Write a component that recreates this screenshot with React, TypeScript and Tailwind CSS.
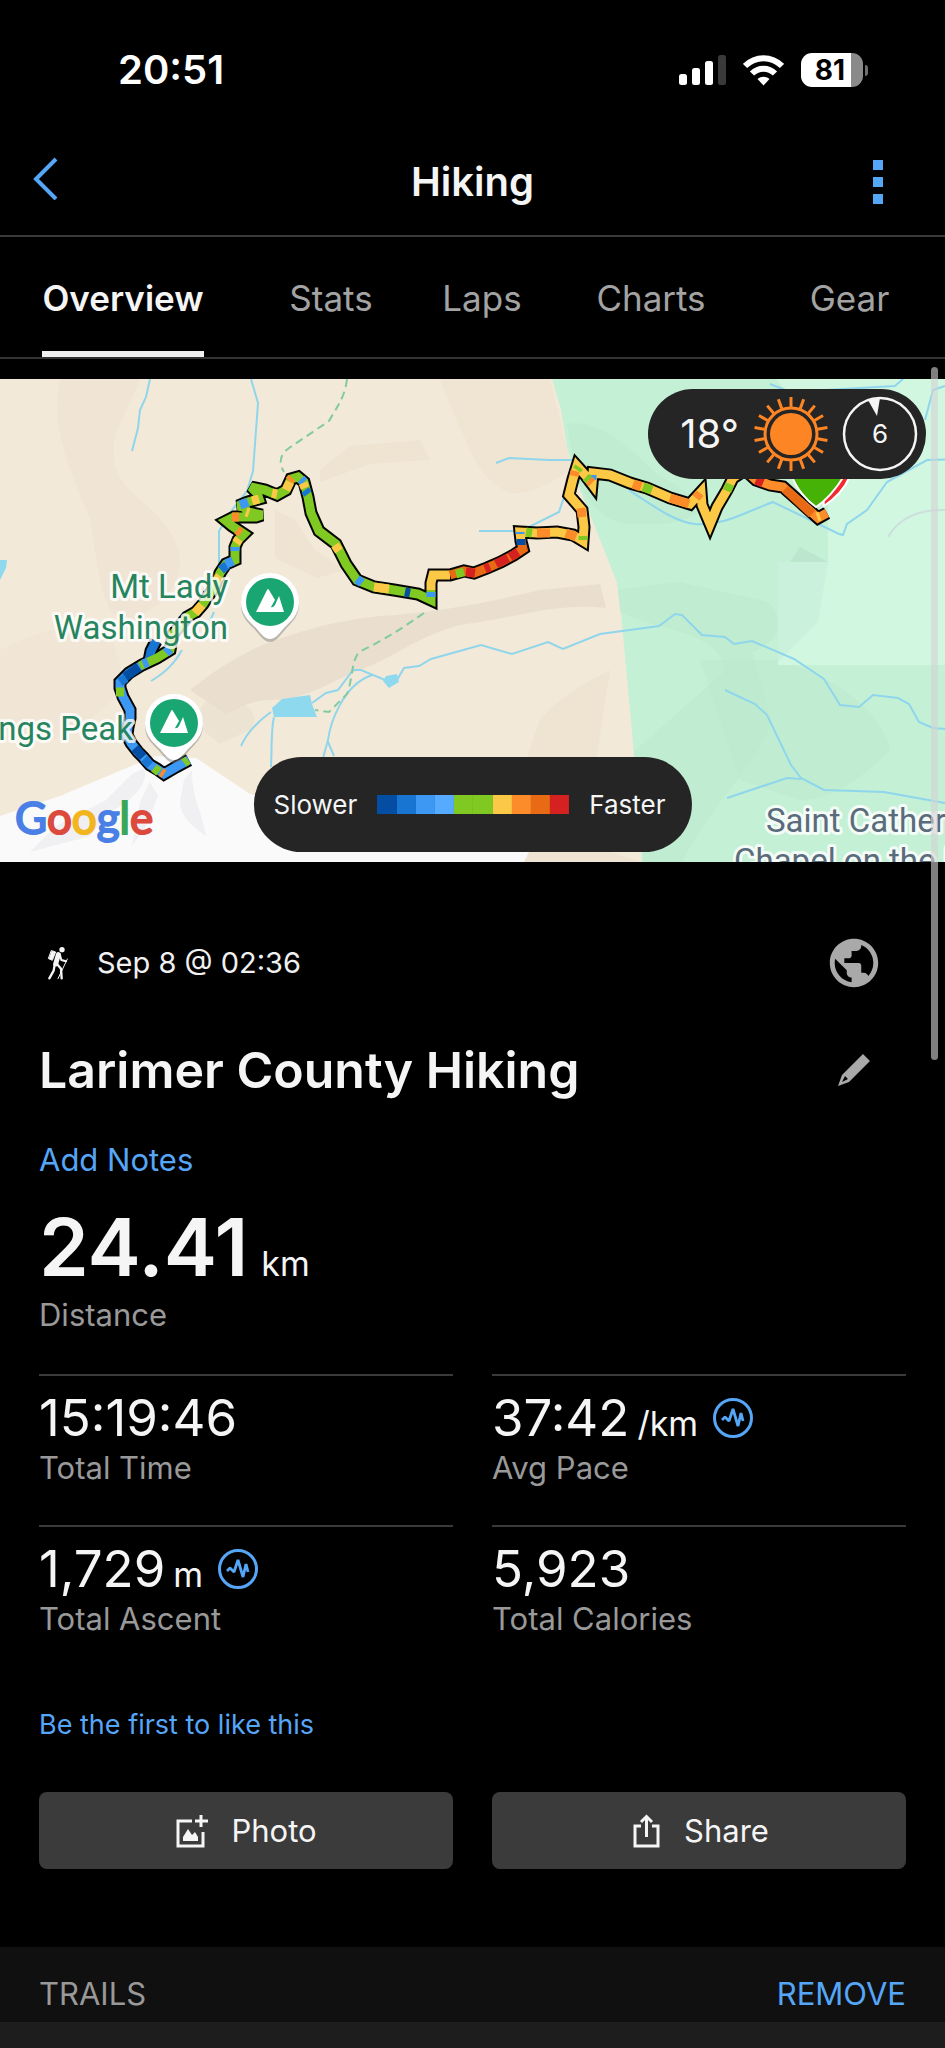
import React from 'react';
import { MdPublic } from 'react-icons/md';

const BLUE_DARK = '#034ea2';
const BLUE = '#1876d2';
const BLUE_LIGHT = '#3d98f4';
const GREEN = '#7fc922';
const YELLOW = '#fcc947';
const ORANGE = '#fc8b2a';
const ORANGE_DARK = '#e96a14';
const RED = '#d62121';

const tabs = ['Overview', 'Stats', 'Laps', 'Charts', 'Gear'];

const paceScale = [BLUE_DARK, BLUE, BLUE_LIGHT, '#57abff', GREEN, GREEN, YELLOW, ORANGE, ORANGE_DARK, RED];

// whole track, drawn twice: once as the outline and once per pace section
const sections = [
  { color: BLUE_LIGHT, points: '189,760 176,767 164,774 157,769 150,765 143,757 138,752 131,743 127,735 128,727 130,718 130,710 123,697 120,688 120,682 129,673 142,665' },
  { color: BLUE, points: '149,661 151,651 156,641' },
  { color: GREEN, points: '142,665 157,658 170,650 173,634 187,617 196,612 203,604 208,596 214,588 220,573 226,564 235,560 235,547 238,540 244,534 232,526 226,521 234,517 256,517 262,515 248,512 244,507 238,506 248,502 259,499 257,493 251,487 265,490 277,495 286,490 291,479 298,477 304,482 308,497 311,513 319,531 336,544 346,564 357,580 374,587 394,590 418,594 431,600 431,590' },
  { color: YELLOW, points: '431,590 431,583 433,575 450,575' },
  { color: ORANGE_DARK, points: '450,575 464,571 474,573 487,568 501,562 514,555 523,549 521,541' },
  { color: YELLOW, points: '521,541 520,532 537,533 557,532 573,535 583,541 584,527 582,510 569,495 573,479 577,466 586,476 592,484 593,473 610,475 630,483 647,488 670,498 690,504 701,492 702,505 710,524 717,507 727,490 733,478 745,470' },
  { color: ORANGE, points: '745,470 756,480 770,485 783,487 800,502 818,518 827,513' },
];

const route = sections
  .filter((_, i) => i !== 1)
  .map((s) => s.points)
  .join(' ');

// short stretches where the pace differs from the rest of its section
const accents = [
  { color: GREEN, d: 'M184 763l4 -3M154 768l5 4M116 692h8M140 666l6 -3' },
  { color: ORANGE, d: 'M161 772l3 2M232 517l7 0M237 530l4 3M289 481l3 -3' },
  { color: BLUE_DARK, d: 'M135 748l8 9M125 677l14 -10M405 592l5 1M521 545v-6' },
  { color: BLUE, d: 'M150 765l-6 -6M120 682l6 -4M221 570l6 -5M305 490l3 4' },
  { color: BLUE_LIGHT, d: 'M143 664l5 -2M166 653l4 -4M226 564l7 -3M235 551v-4M240 505l8 -3M431 597v-5M357 579l5 4M301 479l3 3M592 480v-5M520 534v-2' },
  { color: YELLOW, d: 'M195 613l7 -8M236 543l3 -4M217 580l3 -4M252 501l7 -2M272 493l5 1M286 490l4 -8M303 483l2 5M335 545l4 6M374 587l15 2M246 512l3 1' },
  { color: GREEN, d: 'M456 574l8 -2M577 470l2 -3M526 532l6 1M583 536v4M643 487l9 3M586 477l3 3M727 491l3 -7' },
  { color: RED, d: 'M466 572l9 1M485 569l5 -2M496 564l12 -6M510 557l8 -5M756 480l7 3' },
  { color: ORANGE, d: 'M537 533h13M566 533l10 4M575 471l-1 5M582 517l-1 -9M633 484l8 3M670 498l19 6M696 498l4 -5M589 480l3 3' },
  { color: ORANGE_DARK, d: 'M785 489l27 25' },
  { color: YELLOW, d: 'M817 517l3 -1' },
];

const streams = [
  'M150 379l-4 18 -6 13 -2 18 -6 23',
  'M251 379l7 24 -5 68 -6 20 -15 19 -13 21v34',
  'M214 612l-4 9M182 650c-8 14 -16 22 -31 31',
  'M271 712c-14 10 -24 20 -30 34M274 717c-3 12 -2 30 -3 50',
  'M312 703l14 -10 12 -3 15 -20h8l24 10 12 0 7 -12 15 -2 12 -7 50 -14 31 9 36 -12 15 7 37 -15 59 -8 16 -12 7 1 20 20 23 2 9 7 18 -3 42 18 30 20 16 26 19 2 14 -12 25 3 11 6 10 18 14 6 24 2',
  'M372 675c-30 10 -42 50 -44 65l-5 18M328 742l6 14',
  'M496 463l13 -5 40 2h30M479 531h42l38 -19 7 -21 14 -10',
  'M629 490c24 16 46 32 66 34 30 2 50 -12 78 -22l66 32 4 1 4 -11 20 -14 20 -28 40 -22 34 -1',
  'M770 384l20 8 105 -6 9 -8M925 420l8 -30 12 -4',
  'M725 690l30 14 12 11 24 50 10 13 23 12 60 2 61 11',
  'M727 798l60 -20 14 1',
];

const footpaths = ['M347 379c-2 18 -10 28 -18 42l-40 27c-10 7 -10 16 -5 24', 'M424 613c-20 14 -38 26 -65 39 -8 10 -6 26 -12 42l-18 18 -14 -2'];

const stats = [
  { value: '15:19:46', label: 'Total Time' },
  { value: '37:42', unit: '/km', label: 'Avg Pace', pulse: true },
  { value: '1,729', unit: 'm', label: 'Total Ascent', pulse: true },
  { value: '5,923', label: 'Total Calories' },
];

const googleLetters = [
  ['G', '#4a7fe5'],
  ['o', '#db4a3d'],
  ['o', '#f2b51d'],
  ['g', '#4a7fe5'],
  ['l', '#3aa757'],
  ['e', '#db4a3d'],
];

function StatusBar() {
  return (
    <div className="flex h-[140px] items-center justify-between pl-[118px] pr-[77px]">
      <span className="text-[40px] leading-[48px] font-semibold text-white">20:51</span>
      <div className="flex items-center">
        <svg className="mr-[17px] h-[32px] w-[48px]" viewBox="0 0 48 32">
          <rect x="1" y="20" width="8" height="11" rx="2.5" fill="#fff" />
          <rect x="14" y="14" width="8" height="17" rx="2.5" fill="#fff" />
          <rect x="27" y="7" width="8" height="24" rx="2.5" fill="#fff" />
          <rect x="40" y="1" width="8" height="30" rx="2.5" fill="#3a3a3a" />
        </svg>
        <svg className="mr-[17px] h-[32px] w-[41px]" viewBox="0 0 41 32" fill="none" stroke="#fff" strokeWidth="6">
          <path d="M2 12c10.500 -10.500 26.500 -10.500 37 0" />
          <path d="M9 19.500c6.500 -6.500 16.500 -6.500 23 0" />
          <path d="M20.500 31.500l-6 -6.500c3.500 -3 8.500 -3 12 0z" fill="#fff" stroke="none" />
        </svg>
        <div className="flex h-[34px] w-[62px] items-center justify-center overflow-hidden rounded-[11px] bg-[linear-gradient(to_right,#fff_81%,#8a8a8a_81%)] pr-1">
          <span className="text-[28px] leading-[34px] font-bold text-black">81</span>
        </div>
        <span className="ml-[2px] h-[11px] w-[3px] rounded-r-full bg-[#6f6f6f]" />
      </div>
    </div>
  );
}

function Header() {
  return (
    <header className="grid h-[97px] grid-cols-[1fr_auto_1fr] items-center border-b-2 border-[#3a3a3a] pb-3">
      <button aria-label="Back" className="mb-2 ml-[30px] w-fit">
        <svg className="h-[44px] w-[30px]" viewBox="0 0 30 44" fill="none" stroke="#56a6f8" strokeWidth="4">
          <path d="M26 3L6 23l20 20" />
        </svg>
      </button>
      <h1 className="text-[40px] leading-[48px] font-semibold text-[#f5f5f5]">Hiking</h1>
      <button aria-label="More" className="mr-[58px] flex flex-col gap-[7px] justify-self-end p-1">
        <span className="size-[10px] bg-[#56a6f8]" />
        <span className="size-[10px] bg-[#56a6f8]" />
        <span className="size-[10px] bg-[#56a6f8]" />
      </button>
    </header>
  );
}

function Pin({ x, y }: { x: number; y: number }) {
  return (
    <g transform={`translate(${x} ${y})`}>
      <path d="M-29 1a29 29 0 0 1 58 -1c0 13 -8 19 -15 27 -6 7 -9 11 -14 11s-8 -4 -14 -11c-7 -8 -15 -13 -15 -26z" fill="#777" opacity="0.45" transform="translate(0 2)" />
      <path d="M-29 0a29 29 0 0 1 58 0c0 13 -8 19 -15 26 -6 7 -9 11 -14 11s-8 -4 -14 -11c-7 -7 -15 -13 -15 -26z" fill="#fff" />
      <circle r="24" fill="#1aa673" />
      <path d="M-14 10L-3 -12q1 -2 2 0L5 -2 1 5q2 1 4 -2L9 -6 14 10z" fill="#fff" />
    </g>
  );
}

function TrackMap() {
  return (
    <svg className="block w-full" viewBox="0 379 945 483" role="img" aria-label="Track map">
      <rect y="379" width="945" height="483" fill="#f3e9d8" />
      {/* relief shading */}
      <g fill="#eee2d1">
        <path d="M60 379h80c-10 30 -30 50 -26 80 4 40 60 50 66 100 0 30 -20 50 -50 60 -30 6 -32 -60 -40 -100 -20 -50 -40 -90 -30 -140z" opacity="0.5" />
        <path d="M275 510l20 10 20 30 30 20 -28 8 -42 -20z" opacity="0.8" />
        <path d="M320 470l30 -24 70 -6 10 20 -60 4 -50 18z" opacity="0.8" />
        <path d="M440 379h110l22 90c-30 20 -50 30 -70 20 -30 -20 -30 -40 -42 -60z" opacity="0.6" />
        <path d="M0 650c40 -20 80 -30 110 -20l14 50c-10 30 -50 50 -70 60l-54 -10z" opacity="0.4" />
        <path d="M540 720c20 -24 44 -36 70 -50l-14 90h-70z" opacity="0.8" />
      </g>
      <path d="M190 690c20 -16 40 -30 70 -44 40 -16 80 -26 120 -30 60 -4 110 -14 160 -26l60 -6 6 24c-50 -6 -90 10 -140 16 -40 8 -60 26 -96 42 -40 14 -60 34 -100 34 -20 0 -34 10 -44 14z" fill="#e9dece" opacity="0.9" />
      <path d="M216 690c20 10 50 20 34 40l-30 14 -30 -24z" fill="#eadfce" opacity="0.6" />
      {/* park */}
      <path d="M552 379l9 30 6 38 12 40 24 60 14 36 4 30 12 130 9 119h303V379z" fill="#c4f0d5" />
      <path d="M567 424c30 -6 60 20 90 50l50 30c-20 24 -50 20 -80 20 -30 -4 -44 -30 -52 -50z" fill="#bce8ce" opacity="0.4" />
      <path d="M618 590l60 -8 90 20c20 20 10 40 -16 50l20 70c-20 50 -60 80 -90 140h-38l-10 -110 90 -80c0 -40 -60 -40 -104 -60z" fill="#bbe8ce" opacity="0.5" />
      <path d="M700 660h80c60 20 100 50 110 90 -30 30 -60 50 -90 50l-60 -20z" fill="#bce9cf" opacity="0.5" />
      <path d="M776 379h169v286H778V562h50V440z" fill="#d1f7e1" />
      <path d="M778 562h50l-10 60 -40 40z" fill="#c9f1db" />
      <path d="M790 562l10 -15 28 15z" fill="#bce6cd" />
      {/* snowfield */}
      <path d="M0 816l60 -20 76 -32 20 -8 40 2 54 36 60 16 290 46 -11 6H0z" fill="#fafafa" />
      <path d="M132 774l12 -6c6 16 -14 34 -34 44l-20 24 -60 16 26 -26 50 -26zM184 780l8 -10c0 30 10 40 14 66 -14 -10 -26 -20 -26 -34zM150 782l8 14 -12 30 -14 20 8 -44z" fill="#f0f0f3" />
      <path d="M540 830l102 32h-118z" fill="#efe4d3" />

      <g fill="none" stroke="#8fd6ec" strokeWidth="2">
        {streams.map((d, i) => (
          <path key={i} d={d} />
        ))}
      </g>
      <g fill="#8fd9ee">
        <path d="M272 708l10 -9 28 -4 2 9 5 13h-43zM383 681l3 -5 11 -2 2 8 -10 6zM0 560h7l-1 8 -6 12z" />
      </g>
      <g fill="none" stroke="#82cba2" strokeWidth="2" strokeDasharray="8 5">
        {footpaths.map((d, i) => (
          <path key={i} d={d} />
        ))}
      </g>
      <path d="M888 537c10 -18 30 -28 57 -27" fill="none" stroke="#c9cddb" strokeWidth="2" opacity="0.6" />

      {/* track */}
      <g fill="none" strokeMiterlimit="3">
        <polyline points={route} stroke="#050505" strokeWidth="13" />
        <polyline points={sections[1].points} stroke="#050505" strokeWidth="13" />
        {sections.map((s, i) => (
          <polyline key={i} points={s.points} stroke={s.color} strokeWidth="9" />
        ))}
        {accents.map((a, i) => (
          <path key={i} d={a.d} stroke={a.color} strokeWidth="9" />
        ))}
      </g>
      <path d="M824 506c12 -8 20 -16 25 -28v-20h-30z" fill="#f02b32" stroke="#fff" strokeWidth="2" />
      <path d="M792 476c4 12 14 24 24 31 12 -8 20 -18 28 -31v-20h-52z" fill="#45b205" stroke="#fff" strokeWidth="2" />

      <g fontFamily="Roboto, sans-serif" fontSize="33" stroke="#fff" strokeWidth="6" strokeOpacity="0.8" strokeLinejoin="round" paintOrder="stroke">
        <g fill="#26855f" textAnchor="end">
          <text x="228" y="598">Mt Lady</text>
          <text x="228" y="639">Washington</text>
          <text x="133" y="740">Longs Peak</text>
        </g>
        <g fill="#5a6b7c">
          <text x="766" y="832">Saint Cather</text>
          <text x="734" y="872">Chapel on the R</text>
        </g>
      </g>
      <Pin x={270} y={602} />
      <Pin x={174} y={723} />
      <text x="15" y="834" fontFamily="Lato, sans-serif" fontSize="44" strokeWidth="2">
        {googleLetters.map(([letter, color], i) => (
          <tspan key={i} fill={color} stroke={color}>{letter}</tspan>
        ))}
      </text>
    </svg>
  );
}

function WeatherPill() {
  return (
    <div className="absolute top-[10px] right-[19px] flex h-[90px] items-center rounded-full bg-[#252525] pr-[8px] pl-[32px] text-[#f5f5f5]">
      <span className="text-[40px] leading-[48px]">18°</span>
      <svg className="ml-[13px] size-[78px]" viewBox="-39 -39 78 78">
        <circle r="21" fill="#fd8524" />
        <circle r="26" fill="none" stroke="#fd8524" strokeWidth="3" />
        {Array.from({ length: 18 }, (_, i) => (
          <path key={i} d="M0 -27V-37" stroke="#fd8524" strokeWidth="3" transform={`rotate(${i * 20})`} />
        ))}
      </svg>
      <div className="relative ml-[12px] flex size-[76px] items-center justify-center">
        <svg className="absolute inset-0" viewBox="-38 -38 76 76">
          <circle r="36" fill="none" stroke="#f5f5f5" strokeWidth="2.500" />
          <path d="M-12 -34L0 -36 -3 -18z" fill="#f5f5f5" />
        </svg>
        <span className="text-[26px] leading-[32px]">6</span>
      </div>
    </div>
  );
}

function PaceLegend() {
  return (
    <div className="absolute bottom-[10px] left-1/2 flex h-[95px] -translate-x-1/2 items-center gap-[20px] rounded-full bg-[#252525] pr-[26px] pl-[20px] text-[26px] leading-[32px] text-[#f5f5f5]">
      <span>Slower</span>
      <div className="flex h-[19px] w-[192px]">
        {paceScale.map((color, i) => (
          <span key={i} className="flex-1" style={{ backgroundColor: color }} />
        ))}
      </div>
      <span>Faster</span>
    </div>
  );
}

function PulseIcon() {
  return (
    <svg className="size-[40px]" viewBox="0 0 40 40" fill="none" stroke="#56a6f8">
      <circle cx="20" cy="20" r="18.500" strokeWidth="3" />
      <path d="M9 22l3 -3 4 4 4 -12 5 17 3 -13 2 8" strokeWidth="2.800" strokeLinejoin="bevel" />
    </svg>
  );
}

function HikerIcon() {
  return (
    <svg className="h-[34px] w-[22px]" viewBox="51 48 64 102" fill="none" stroke="#f5f5f5" strokeLinecap="round" strokeLinejoin="round">
      <circle cx="95" cy="59" r="8" fill="#f5f5f5" stroke="none" />
      <path d="M64 62l12 4 -10 25 -11 -5z" fill="#f5f5f5" strokeWidth="3" />
      <path d="M84 74l-8 28" strokeWidth="15" />
      <path d="M89 75l4 15 14 4" strokeWidth="6" />
      <path d="M80 102l12 14 2 29M73 104l-3 18 -13 23" strokeWidth="7" />
      <path d="M111 87l-28 59" strokeWidth="3" />
    </svg>
  );
}

export default function App() {
  return (
    <div className="min-h-[2048px] overflow-hidden bg-black font-['Inter',sans-serif]">
      <StatusBar />
      <Header />

      <nav className="grid h-[122px] grid-cols-[246fr_170fr_132fr_206fr_191fr] border-b-2 border-[#333] text-[35px] leading-[44px]">
        {tabs.map((tab, i) => (
          <button
            key={tab}
            className={
              i === 0
                ? 'justify-self-center border-b-[6px] border-[#f0f0f0] pt-[8px] font-semibold text-[#f5f5f5]'
                : 'justify-self-center border-b-[6px] border-transparent pt-[8px] text-[#a3a3a3]'
            }
          >
            {tab}
          </button>
        ))}
      </nav>

      <main className="relative pt-[20px]">
        <div className="absolute top-[8px] right-[7px] z-10 h-[693px] w-[7px] rounded-full bg-[#d4d4d4]/60" />
        <div className="relative">
          <TrackMap />
          <WeatherPill />
          <PaceLegend />
        </div>

        <div className="px-[39px]">
          <div className="mt-[72px] flex h-[58px] items-center justify-between pr-[23px]">
            <div className="flex items-center gap-[28px] pl-[8px] text-[29px] leading-[36px] text-[#f0f0f0]">
              <HikerIcon />
              <span>Sep 8 @ 02:36</span>
            </div>
            <button aria-label="Privacy">
              <MdPublic className="size-[58px] text-[#a9a9a9]" />
            </button>
          </div>

          <div className="mt-[46px] flex items-center justify-between pr-[35px]">
            <h2 className="text-[50px] leading-[64px] font-semibold text-[#f5f5f5]">Larimer County Hiking</h2>
            <button aria-label="Edit name">
              <svg className="size-[34px]" viewBox="0 0 34 34" fill="#a9a9a9">
                <path fillRule="evenodd" d="M26 1l7 7L12 29 1 33l4 -11zM8 23l-3 6 6 -3z" />
              </svg>
            </button>
          </div>

          <button className="mt-[38px] block text-[31px] leading-[40px] text-[#56a6f8]">Add Notes</button>

          <div className="mt-[19px] flex items-baseline gap-[13px] text-[#f5f5f5]">
            <span className="text-[80px] leading-[96px] font-semibold">24.41</span>
            <span className="text-[34px] leading-[40px]">km</span>
          </div>
          <p className="text-[31px] leading-[40px] text-[#999]">Distance</p>

          <div className="mt-[39px] grid grid-cols-2 gap-x-[39px]">
            {stats.map((stat) => (
              <div key={stat.label} className="h-[151px] border-t-2 border-[#3a3a3a] pt-[12px]">
                <div className="flex items-center">
                  <div className="flex items-baseline gap-[8px] text-[#f5f5f5]">
                    <span className="text-[51px] leading-[60px]">{stat.value}</span>
                    {stat.unit && <span className="text-[34px] leading-[40px]">{stat.unit}</span>}
                  </div>
                  {stat.pulse && (
                    <button aria-label={`${stat.label} details`} className="ml-[15px]">
                      <PulseIcon />
                    </button>
                  )}
                </div>
                <p className="text-[31px] leading-[40px] text-[#999]">{stat.label}</p>
              </div>
            ))}
          </div>

          <button className="mt-[32px] block text-[27px] leading-[34px] text-[#56a6f8]">Be the first to like this</button>

          <div className="mt-[50px] grid grid-cols-2 gap-[39px] text-[31px] leading-[40px] text-[#f5f5f5]">
            <button className="flex h-[77px] items-center justify-center gap-[22px] rounded-[8px] bg-[#3b3b3b]">
              <svg className="size-[34px]" viewBox="0 0 34 34" fill="none" stroke="#f5f5f5" strokeWidth="3">
                <path d="M17 7H3v25h25V18M26 1v12M20 7h13" />
                <path d="M8 27v-4l5 -8 4 6 3 -3 3 5v4z" fill="#f5f5f5" stroke="none" />
              </svg>
              Photo
            </button>
            <button className="flex h-[77px] items-center justify-center gap-[24px] rounded-[8px] bg-[#3b3b3b] pl-1">
              <svg className="h-[34px] w-[27px]" viewBox="0 0 27 34" fill="none" stroke="#f5f5f5" strokeWidth="3">
                <path d="M8 12H2v20h23V12h-6M13.500 23V3M8 8l5.500 -5.500L19 8" />
              </svg>
              Share
            </button>
          </div>
        </div>

        <section className="mt-[78px]">
          <div className="flex h-[75px] items-center justify-between bg-[#101010] px-[39px] pt-[19px] text-[31px] leading-[40px]">
            <h3 className="text-[#999]">TRAILS</h3>
            <button className="text-[#56a6f8]">REMOVE</button>
          </div>
          <div className="h-[26px] bg-[#1d1d1d]" />
        </section>
      </main>
    </div>
  );
}
